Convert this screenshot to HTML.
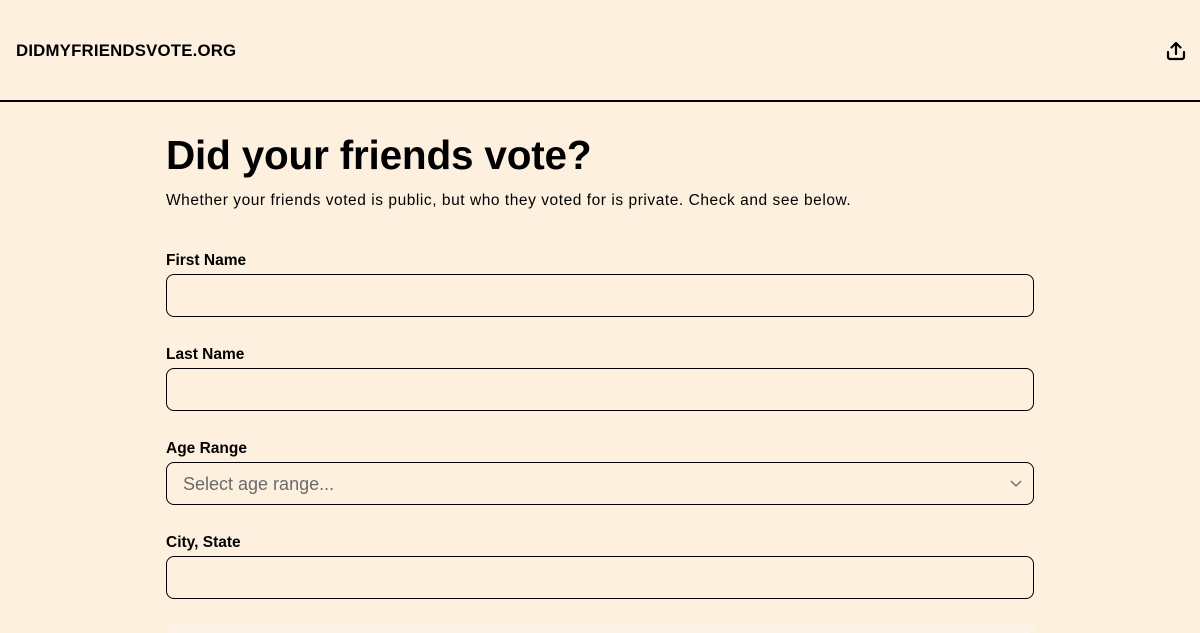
<!DOCTYPE html>
<html><head><style>
*{box-sizing:border-box;margin:0;padding:0}
body{width:1200px;height:630px;overflow:hidden;background:#fdf0df;font-family:"Liberation Sans",sans-serif;color:#000;position:relative}
.hdr{height:102px;border-bottom:2px solid #000;position:relative}
.logo{position:absolute;left:16px;top:41px;font-size:16.8px;font-weight:bold;letter-spacing:0.2px}
.share{position:absolute;left:1166px;top:40px}
h1{position:absolute;left:166px;top:132px;font-size:40.5px;font-weight:bold;letter-spacing:-0.2px}
.sub{position:absolute;left:166px;top:192px;font-size:15.5px;letter-spacing:0.55px}
.lbl{position:absolute;left:166px;font-size:15.5px;font-weight:bold}
.in{position:absolute;left:166px;width:868px;height:43px;border:1px solid #000;border-radius:8px}
.ph{position:absolute;left:16px;top:11px;font-size:18px;color:#6b6b6b}
.bot{position:absolute;left:166px;top:623px;width:868px;height:10px;background:#fdf3e6;border-radius:6px}
</style></head><body>
<div class="hdr"><div class="logo">DIDMYFRIENDSVOTE.ORG</div>
<svg class="share" width="20" height="22" viewBox="0 0 20 22" fill="none" stroke="#000" stroke-width="2.2" stroke-linecap="round" stroke-linejoin="round"><path d="M10 14V3M5.5 7.5L10 3l4.5 4.5M2 12v5a2 2 0 0 0 2 2h12a2 2 0 0 0 2-2v-5"/></svg>
</div>
<h1>Did your friends vote?</h1>
<div class="sub">Whether your friends voted is public, but who they voted for is private. Check and see below.</div>
<div class="lbl" style="top:252px">First Name</div>
<div class="in" style="top:274px"></div>
<div class="lbl" style="top:346px">Last Name</div>
<div class="in" style="top:368px"></div>
<div class="lbl" style="top:440px">Age Range</div>
<div class="in" style="top:462px"><span class="ph">Select age range...</span>
<svg style="position:absolute;right:11px;top:17px" width="12" height="8" viewBox="0 0 12 8" fill="none" stroke="#666" stroke-width="1.3"><path d="M1 1l5 5 5-5"/></svg></div>
<div class="lbl" style="top:534px">City, State</div>
<div class="in" style="top:556px"></div>
<div class="bot"></div>
</body></html>
